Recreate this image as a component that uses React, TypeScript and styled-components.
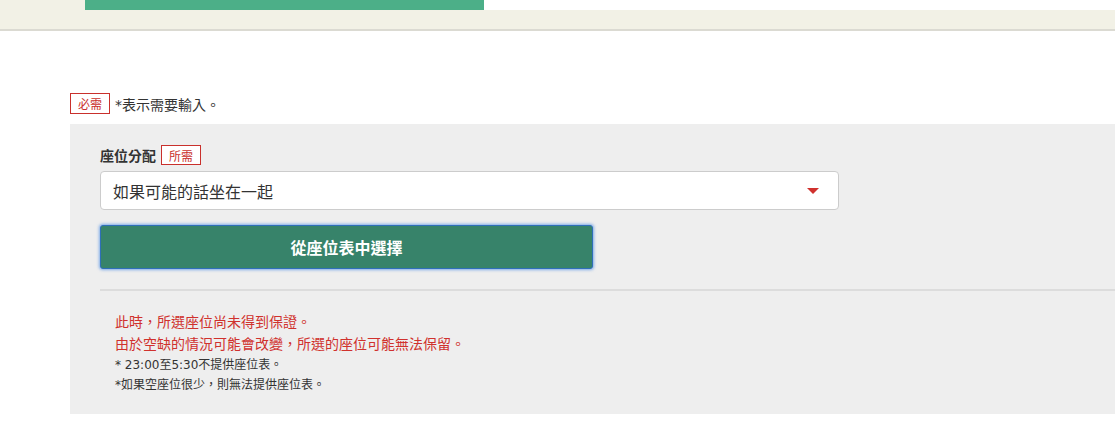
import styled, { createGlobalStyle } from "styled-components";

const GlobalStyle = createGlobalStyle`
  html, body {
    margin: 0;
    padding: 0;
    background: #fff;
    overflow: hidden;
  }
  body {
    font-family: "DejaVu Sans", "Noto Sans CJK TC", sans-serif;
    color: #333;
  }
`;

const notes = [
  { text: "此時，所選座位尚未得到保證。", warn: true },
  { text: "由於空缺的情況可能會改變，所選的座位可能無法保留。", warn: true },
  { text: "* 23:00至5:30不提供座位表。", warn: false },
  { text: "*如果空座位很少，則無法提供座位表。", warn: false },
];

function App() {
  // 進度：步驟 1 / 完成比例
  const progress = 399;

  return (
    <Page>
      <GlobalStyle />
      <Header>
        <Track>
          <TrackPad />
          <TrackFill style={{ width: progress }} />
          <TrackRest />
        </Track>
      </Header>

      <RequiredNote>
        <Tag>必需</Tag>
        <span>*表示需要輸入。</span>
      </RequiredNote>

      <Panel>
        <FieldLabel>
          座位分配
          <Tag>所需</Tag>
        </FieldLabel>
        <Select>
          <span>如果可能的話坐在一起</span>
          <Caret />
        </Select>
        <PickButton type="button">從座位表中選擇</PickButton>

        <Divider />

        <Notes>
          {notes.map((n) => (
            <Note key={n.text} $warn={n.warn}>
              {n.text}
            </Note>
          ))}
        </Notes>
      </Panel>
    </Page>
  );
}

export default App;

// Style
const Page = styled.div`
  width: 1115px;
  height: 430px;
  overflow: hidden;
`;

const Header = styled.div`
  height: 29px;
  background: #f2f1e6;
  border-bottom: 2px solid #dbdad2;
`;

const Track = styled.div`
  display: flex;
  height: 10px;
`;

const TrackPad = styled.div`
  width: 85px;
`;

const TrackFill = styled.div`
  background: #4caf88;
`;

const TrackRest = styled.div`
  flex: 1;
  background: #fff;
`;

const RequiredNote = styled.div`
  display: flex;
  align-items: center;
  gap: 5px;
  margin: 62px 0 0 70px;
  height: 21px;
  font-size: 14px;
  color: #333;
`;

const Tag = styled.span`
  display: inline-flex;
  align-items: center;
  justify-content: center;
  box-sizing: border-box;
  width: 40px;
  height: 21px;
  border: 1px solid #c9302c;
  background: #fff;
  color: #c9302c;
  font-size: 12px;
  font-weight: normal;
`;

const Panel = styled.div`
  margin: 10px 0 0 70px;
  width: 1100px;
  box-sizing: border-box;
  background: #eeeeee;
  padding: 21px 0 19px 30px;
`;

const FieldLabel = styled.div`
  display: flex;
  align-items: center;
  gap: 5px;
  height: 20px;
  font-size: 14px;
  font-weight: bold;
  color: #333;

  ${Tag} {
    height: 20px;
  }
`;

const Select = styled.div`
  margin-top: 6px;
  width: 739px;
  height: 39px;
  box-sizing: border-box;
  display: flex;
  align-items: center;
  justify-content: space-between;
  padding: 0 19px 0 12px;
  background: #fff;
  border: 1px solid #cccccc;
  border-radius: 4px;
  font-size: 16px;
  color: #333;
`;

const Caret = styled.span`
  width: 0;
  height: 0;
  border-left: 6px solid transparent;
  border-right: 6px solid transparent;
  border-top: 6px solid #d0312d;
`;

const PickButton = styled.button`
  display: block;
  margin-top: 15px;
  width: 493px;
  height: 44px;
  box-sizing: border-box;
  background: #37836a;
  border: 1px solid #2f6fb8;
  border-radius: 3px;
  box-shadow: 0 0 3px 1px rgba(90, 150, 230, 0.75);
  color: #fff;
  font-family: inherit;
  font-size: 16px;
  font-weight: bold;
  cursor: pointer;
`;

const Divider = styled.div`
  margin-top: 20px;
  height: 2px;
  background: #dcdcdc;
`;

const Notes = styled.div`
  margin-top: 20px;
  padding-left: 15px;
`;

const Note = styled.div<{ $warn: boolean }>`
  font-size: ${(p) => (p.$warn ? "14px" : "12px")};
  line-height: ${(p) => (p.$warn ? "22px" : "20px")};
  color: ${(p) => (p.$warn ? "#d0312d" : "#333")};
`;
